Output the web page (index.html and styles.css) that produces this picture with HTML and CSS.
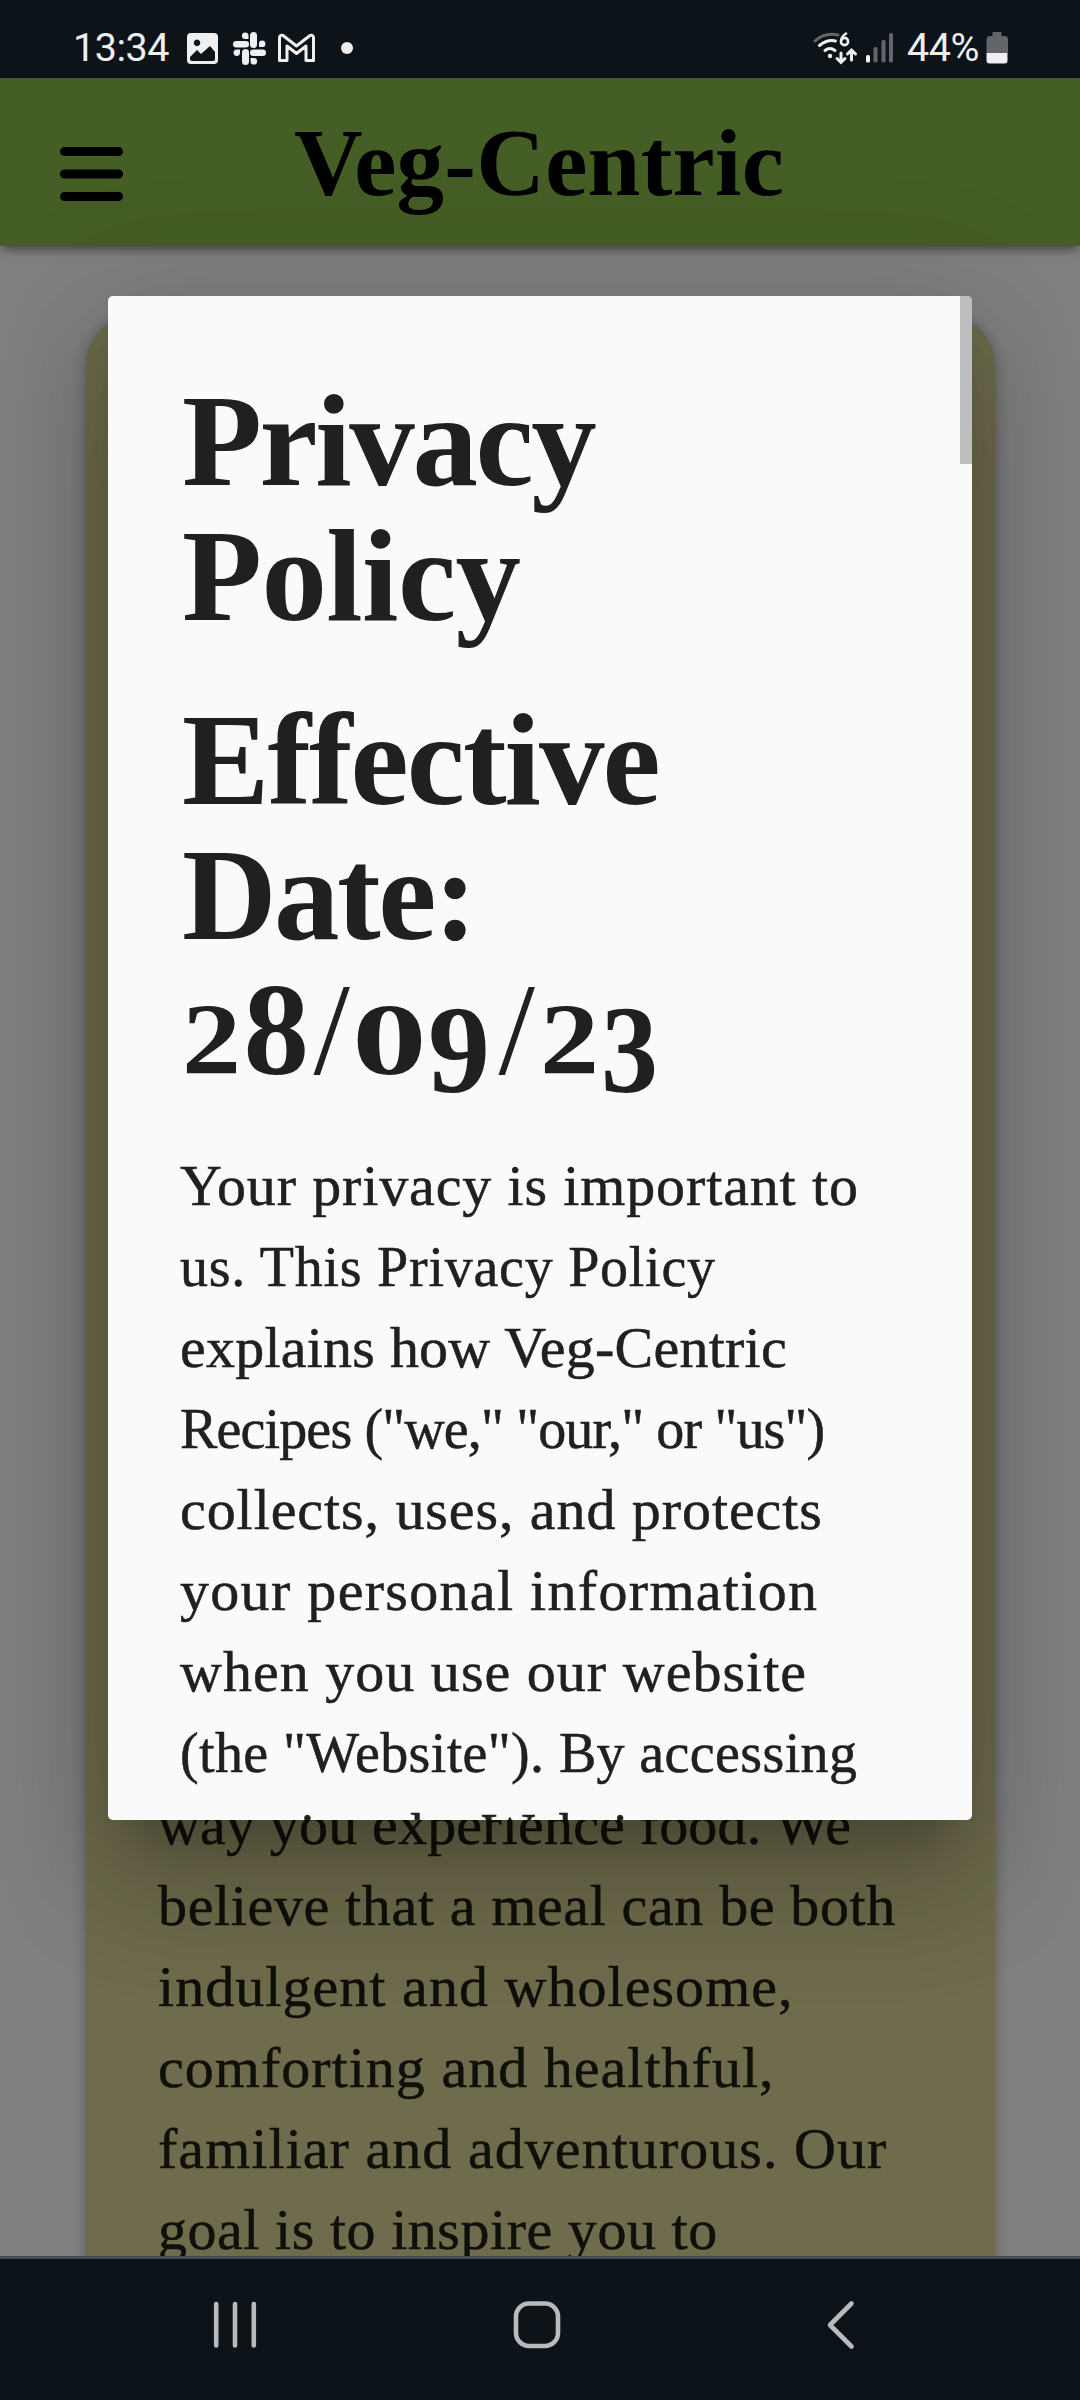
FILE: index.html
```html
<!DOCTYPE html>
<html lang="en">
<head>
<meta charset="utf-8">
<title>Veg-Centric</title>
<link rel="stylesheet" href="styles.css">
</head>
<body>
<div class="phone">
  <div class="status">
    <span class="clock">13:34</span>
    <svg class="notices" width="180" height="78" viewBox="180 0 180 78">
      <path fill="#efefef" fill-rule="evenodd" d="M191 33h23q4 0 4 4v23q0 4-4 4h-23q-4 0-4-4V37q0-4 4-4zM197 39.500a3.300 3.300 0 1 0 .01 0zM190 57v2q0 2 2 2h21q2 0 2-2v-7l-5-6-9 8-4-4z"/>
      <g fill="#efefef">
        <rect x="250" y="32" width="7" height="16" rx="3.500"/><rect x="233" y="41" width="16" height="6.500" rx="3.200"/>
        <rect x="242" y="49" width="7" height="16" rx="3.500"/><rect x="250" y="49.500" width="16" height="6.500" rx="3.200"/>
        <path d="M248.500 39v-3.500a3.300 3.300 0 1 0-3.200 3.500zM259 47h3.500a3.200 3.200 0 1 0-3.500-3.200zM250.500 58v3.500a3.300 3.300 0 1 0 3.200-3.500zM240 49.500h-3.500a3.200 3.200 0 1 0 3.500 3.200z"/>
      </g>
      <path fill="none" stroke="#efefef" stroke-width="3" stroke-linejoin="round" d="M279.500 60.500V38q0-3.500 3.500-2.500L296.500 46 310 35.500q3.500-1 3.500 2.500v22.500h-7.500V46L296.500 53.500 287 46v14.500z"/>
      <circle cx="347" cy="48" r="6" fill="#efefef"/>
    </svg>
    <svg class="signal" width="90" height="78" viewBox="810 0 90 78">
      <g fill="none" stroke-width="3" stroke-linecap="round">
        <path stroke="#62666a" d="M815 41q10-9 23-6"/>
        <path stroke="#efefef" d="M819.500 45.500q8-6.500 16-4.500M825 50.500q5-4 10 0M841 53v9M837 58.500l4 4 4-4M851.500 60v-10M847.500 54l4-4 4 4"/>
      </g>
      <circle cx="830" cy="56" r="2.200" fill="#efefef"/>
      <path fill="none" stroke="#efefef" stroke-width="2.600" stroke-linecap="round" d="M846 33.500q-4.500 3-4.800 7"/>
      <circle cx="844.500" cy="41.500" r="3.600" fill="none" stroke="#efefef" stroke-width="2.600"/>
      <g fill="#62666a"><rect x="873.500" y="47" width="4" height="15.500" rx="1.500"/><rect x="881.500" y="40" width="4" height="22.500" rx="1.500"/><rect x="889" y="33" width="4" height="29.500" rx="1.500"/></g>
      <rect x="866" y="55" width="4" height="7.500" rx="1.500" fill="#efefef"/>
    </svg>
    <span class="charge">44%</span>
    <svg class="battery" width="22" height="78" viewBox="985.500 0 22 78">
      <path fill="#62666a" d="M992 32h9v4h3q3.500 0 3.500 3.500V53H986V39.500q0-3.500 3.500-3.500h2.500z"/>
      <path fill="#efefef" d="M986 53h21v7.500q0 3-3 3h-15q-3 0-3-3z"/>
    </svg>
  </div>

  <div class="app">
    <header class="bar">
      <svg class="menu" width="64" height="56" viewBox="0 0 64 56"><path stroke="#000" stroke-width="9" stroke-linecap="round" d="M4.500 5.500h54M4.500 28h54M4.500 50.500h54"/></svg>
      <div class="brand">Veg-Centric</div>
    </header>
    <main class="card">
      <p class="text">
        <span class="l x l1">way you experience food. We</span>
        <span class="l x l2">believe that a meal can be both</span>
        <span class="l x l3">indulgent and wholesome,</span>
        <span class="l x l4">comforting and healthful,</span>
        <span class="l x l5">familiar and adventurous. Our</span>
        <span class="l x l6">goal is to inspire you to</span>
      </p>
    </main>
    <section class="modal">
      <h1><span class="l h-privacy">Privacy</span><span class="l h-policy">Policy</span></h1>
      <h1><span class="l h-effective">Effective</span><span class="l h-date">Date:</span><span class="figures"><span class="two">2</span><span class="eight">8</span><span class="slash">/</span><span class="zero">0</span><span class="nine">9</span><span class="slash wide">/</span><span class="two">2</span><span class="three">3</span></span></h1>
      <p class="text">
        <span class="l x m1">Your privacy is important to</span>
        <span class="l m2">us. This Privacy Policy</span>
        <span class="l x m3">explains how Veg-Centric</span>
        <span class="l m4">Recipes ("we," "our," or "us")</span>
        <span class="l x m5">collects, uses, and protects</span>
        <span class="l x m6">your personal information</span>
        <span class="l x m7">when you use our website</span>
        <span class="l m8">(the "Website"). By accessing</span>
        <span class="l m9">or using the Website, you</span>
      </p>
      <div class="thumb"></div>
    </section>
  </div>

  <nav class="keys">
    <svg width="1080" height="141" viewBox="0 2259 1080 141">
      <g fill="none" stroke="#b9babc" stroke-width="4.600" stroke-linecap="round">
        <path d="M216.200 2304v41.500M235 2304v41.500M253.800 2304v41.500"/>
        <rect x="516" y="2303.500" width="42" height="42.500" rx="13"/>
        <path stroke-linejoin="round" d="M851.500 2303.500 830 2325l21.500 21.500"/>
      </g>
    </svg>
  </nav>
</div>
</body>
</html>
```
FILE: styles.css
```css
* { box-sizing: border-box; }
body { margin: 0; background: #0c1319; }
.phone { width: 1080px; height: 2400px; display: flex; flex-direction: column; overflow: hidden; font-family: "Liberation Serif", serif; }
.phone svg { display: block; flex: none; }

.status { height: 78px; flex: none; display: flex; background: #0c1319; color: #efefef; font: 39.5px/78px Roboto, sans-serif; padding-left: 73px; }
.clock, .charge { padding-top: 9px; height: 78px; letter-spacing: -.5px; white-space: nowrap; }
.clock { width: 107px; }
.signal { margin-left: 450px; }
.charge { width: 85.5px; padding-left: 7px; }

.app { position: relative; height: 2178px; flex: none; overflow: hidden; background: #808080; }
.bar { position: relative; z-index: 1; height: 168px; display: flex; background: #455e25; box-shadow: 0 6px 10px -3px rgba(0, 0, 0, .5); padding-left: 60px; }
.menu { margin-top: 68px; }
.brand { margin-left: 170px; padding-top: 35px; font-size: 95px; line-height: 100px; font-weight: bold; letter-spacing: .27px; white-space: nowrap; }

.card { margin: 67px 85px 0 86px; height: 2000px; padding: 1472px 0 0 72px; background: #6f6c4d; border-radius: 54px; box-shadow: 0 3px 14px rgba(0, 0, 0, .3); color: #10100a; }
.text { margin: 0; font-size: 56px; line-height: 81px; -webkit-text-stroke: .5px currentColor; }
.l { display: block; white-space: nowrap; }
.x { transform: scaleX(1.035); transform-origin: 0 50%; }

.modal { position: absolute; z-index: 2; left: 108px; top: 218px; width: 864px; height: 1524px; overflow: hidden; padding: 76.500px 0 0 72px; background: #fafafa; color: #202020; border-radius: 5px; box-shadow: 0 33px 45px -21px rgba(0, 0, 0, .2), 0 72px 114px 9px rgba(0, 0, 0, .14), 0 27px 138px 24px rgba(0, 0, 0, .12); }
.modal h1 { margin: 0 0 49px; padding-left: 2px; font-size: 131px; line-height: 135px; font-weight: bold; }
.modal h1 + h1 { margin-bottom: 49px; }
.thumb { position: absolute; top: 0; right: 0; width: 12px; height: 168px; background: #bdbdbd; }

.h-privacy { letter-spacing: -2.4px; }
.h-policy { letter-spacing: -.6px; }
.h-effective { letter-spacing: -2px; }
.h-date { letter-spacing: -2.5px; }

/* old-style figures: 2 and 0 at x-height, 9 and 3 below the baseline */
.figures { display: flex; align-items: baseline; height: 135px; }
.figures span { flex: none; transform-origin: 0 50%; }
.two { width: 61.500px; font-size: 101px; transform: scaleX(1.17); }
.eight { width: 70px; }
.slash { width: 38px; font-weight: normal; }
.slash.wide { width: 41px; }
.zero { width: 76.500px; font-size: 101px; transform: scaleX(1.48); }
.nine { width: 70.500px; font-size: 124px; transform: translateY(18px); }
.three { width: 52px; font-size: 124px; transform: translateY(18px) scaleX(.92); }

.m1 { letter-spacing: .85px; }
.m2 { letter-spacing: .75px; }
.m3 { letter-spacing: .24px; }
.m4 { letter-spacing: -.85px; }
.m5 { letter-spacing: .91px; }
.m6 { letter-spacing: 1.28px; }
.m7 { letter-spacing: 1.01px; }
.m8 { letter-spacing: .38px; }
.m9 { letter-spacing: 1.9px; }
.l1 { letter-spacing: .19px; }
.l2 { letter-spacing: .63px; }
.l3 { letter-spacing: 1.03px; }
.l4 { letter-spacing: 1px; }
.l5 { letter-spacing: 1.03px; }
.l6 { letter-spacing: .54px; }

.keys { height: 144px; flex: none; border-top: 3px solid #464c52; background: #0c1319; }
```
